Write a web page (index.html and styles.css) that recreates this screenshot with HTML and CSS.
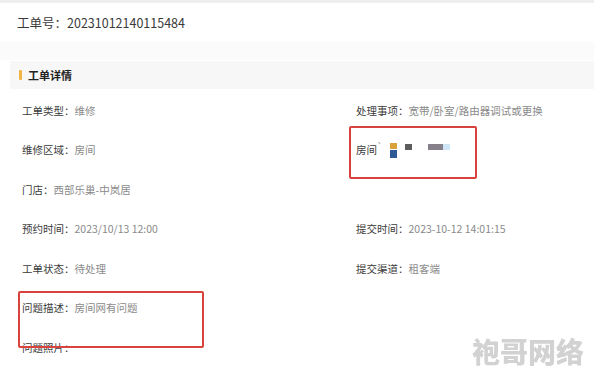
FILE: index.html
```html
<!DOCTYPE html>
<html lang="zh-CN">
<head>
<meta charset="utf-8">
<title>工单详情</title>
<link rel="stylesheet" href="styles.css">
</head>
<body>
<div class="topline"></div>
<div class="header">工单号：20231012140115484</div>
<div class="gap"></div>
<div class="card">
  <div class="sec-title"><span class="bar"></span><span class="sec-text">工单详情</span></div>
  <div class="grid">
    <div class="cell"><span class="label">工单类型：</span><span class="value">维修</span></div>
    <div class="cell"><span class="label">处理事项：</span><span class="value">宽带/卧室/路由器调试或更换</span></div>
    <div class="cell"><span class="label">维修区域：</span><span class="value">房间</span></div>
    <div class="cell"><span class="label">房间</span><span class="tick">`</span>
      <span class="pix">
        <span class="stack"><i class="px orange"></i><i class="px blue"></i></span>
        <i class="px dark"></i>
        <i class="px wide"></i><i class="px light"></i>
      </span>
    </div>
    <div class="cell"><span class="label">门店：</span><span class="value">西部乐巢-中岚居</span></div>
    <div class="cell"></div>
    <div class="cell"><span class="label">预约时间：</span><span class="value">2023/10/13 12:00</span></div>
    <div class="cell"><span class="label">提交时间：</span><span class="value">2023-10-12 14:01:15</span></div>
    <div class="cell"><span class="label">工单状态：</span><span class="value">待处理</span></div>
    <div class="cell"><span class="label">提交渠道：</span><span class="value">租客端</span></div>
    <div class="cell"><span class="label">问题描述：</span><span class="value">房间网有问题</span></div>
    <div class="cell"></div>
    <div class="cell"><span class="label">问题照片：</span></div>
    <div class="cell"></div>
  </div>
  <div class="mark mark-room"></div>
  <div class="mark mark-desc"></div>
</div>
<div class="watermark">袍哥网络</div>
</body>
</html>
```

FILE: styles.css
```css
html, body {
  margin: 0;
  padding: 0;
  background: #ffffff;
  width: 594px;
  height: 375px;
  overflow: hidden;
  font-family: "Noto Sans CJK SC", "Noto Sans", sans-serif;
  color: #333;
}

.topline {
  height: 3px;
  background: #eeeeee;
}

.header {
  height: 39px;
  display: flex;
  align-items: center;
  padding-left: 17px;
  font-size: 12.5px;
  color: #3a3a3a;
}

.gap {
  height: 18px;
  background: #fbfbfb;
}

.card {
  position: relative;
  padding: 1px 0 0 10px;
}

.sec-title {
  height: 28px;
  background: #f7f7f7;
  display: flex;
  align-items: center;
  padding-left: 9px;
}

.bar {
  width: 3px;
  height: 10px;
  background: #f1b445;
  border-radius: 1px;
}

.sec-text {
  margin-left: 6px;
  font-size: 11px;
  font-weight: 700;
  color: #222;
}

.grid {
  display: grid;
  grid-template-columns: 334px 1fr;
  grid-auto-rows: 39.5px;
  padding: 1.5px 0 0 12px;
}

.cell {
  display: flex;
  align-items: center;
  font-size: 10.5px;
  white-space: nowrap;
}

.label {
  color: #3c3c3c;
}

.value {
  color: #8a8a8a;
}

.tick {
  color: #777;
  font-size: 9px;
  margin-top: -6px;
}

.pix {
  display: flex;
  align-items: flex-start;
  margin-left: 8px;
  height: 15px;
  padding-top: 1px;
}

.stack {
  display: flex;
  flex-direction: column;
}

.px {
  display: block;
  height: 6px;
  filter: blur(0.4px);
}

.orange { width: 7px; background: #d9a23a; }
.blue { width: 7px; height: 8px; background: #2d5a95; margin-top: 1px; }
.dark { width: 7px; background: #5d5d5d; margin-left: 8px; margin-top: 1px; }
.wide { width: 15px; background: #858089; margin-left: 16px; margin-top: 1px; }
.light { width: 7px; background: #cfe6f7; margin-top: 1px; }

.mark {
  position: absolute;
  border: 2.5px solid #d8433d;
  border-radius: 2px;
  box-sizing: border-box;
}

.mark-room {
  left: 349px;
  top: 66px;
  width: 128px;
  height: 53px;
}

.mark-desc {
  left: 18px;
  top: 231px;
  width: 186px;
  height: 57px;
}

.watermark {
  position: absolute;
  left: 472px;
  top: 333px;
  font-size: 28px;
  font-weight: 900;
  color: #d2d2d2;
  line-height: 36px;
  letter-spacing: 0;
  filter: blur(0.5px);
}
```
